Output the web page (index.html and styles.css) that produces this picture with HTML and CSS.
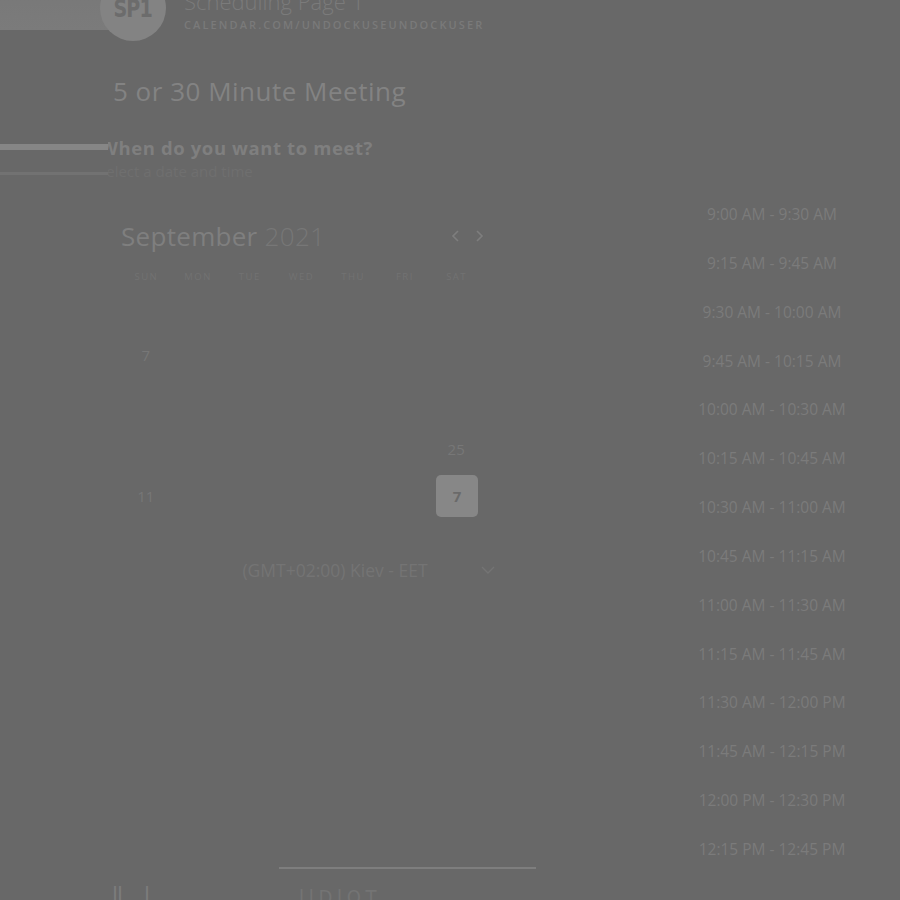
FILE: index.html
```html
<!DOCTYPE html>
<html>
<head>
<meta charset="utf-8">
<link rel="stylesheet" href="styles.css">
</head>
<body>
<div class="page">
  <header class="header">
    <div class="hbar"></div>
    <div class="avatar"><span>SP1</span></div>
    <div class="htext">
      <div class="pname">Scheduling Page 1</div>
      <div class="purl">CALENDAR.COM/UNDOCKUSEUNDOCKUSER</div>
    </div>
  </header>

  <main class="main">
    <section class="left">
      <h1 class="mtitle">5 or 30 Minute Meeting</h1>
      <div class="ask">
        <div class="rail">
          <div class="rail-a"></div>
          <div class="rail-b"></div>
        </div>
        <div class="ask-clip">
          <div class="ask-q">When do you want to meet?</div>
          <div class="ask-s">Select a date and time</div>
        </div>
      </div>

      <div class="cal">
        <div class="cal-head">
          <div class="month"><span class="mname">September</span> <span class="myear">2021</span></div>
          <div class="navs">
            <svg width="12" height="14" viewBox="0 0 12 14"><path d="M8 2 L3 7 L8 12" fill="none" stroke="#7e7e7e" stroke-width="1.6"/></svg>
            <svg width="12" height="14" viewBox="0 0 12 14"><path d="M4 2 L9 7 L4 12" fill="none" stroke="#7e7e7e" stroke-width="1.6"/></svg>
          </div>
        </div>
        <div class="grid">
          <div class="dh">SUN</div><div class="dh">MON</div><div class="dh">TUE</div><div class="dh">WED</div><div class="dh">THU</div><div class="dh">FRI</div><div class="dh">SAT</div>
          <div class="d"></div><div class="d"></div><div class="d"></div><div class="d"></div><div class="d"></div><div class="d"></div><div class="d"></div>
          <div class="d">7</div><div class="d"></div><div class="d"></div><div class="d"></div><div class="d"></div><div class="d"></div><div class="d"></div>
          <div class="d"></div><div class="d"></div><div class="d"></div><div class="d"></div><div class="d"></div><div class="d"></div><div class="d"></div>
          <div class="d"></div><div class="d"></div><div class="d"></div><div class="d"></div><div class="d"></div><div class="d"></div><div class="d">25</div>
          <div class="d">11</div><div class="d"></div><div class="d"></div><div class="d"></div><div class="d"></div><div class="d"></div><div class="d"><span class="sel">7</span></div>
        </div>
        <div class="tz">
          <span class="tz-text">(GMT+02:00) Kiev - EET</span>
          <svg class="tz-chev" width="16" height="10" viewBox="0 0 16 10"><path d="M2 2 L8 8 L14 2" fill="none" stroke="#747474" stroke-width="1.4"/></svg>
        </div>
      </div>
    </section>

    <aside class="times">
      <div class="slot">9:00 AM - 9:30 AM</div>
      <div class="slot">9:15 AM - 9:45 AM</div>
      <div class="slot">9:30 AM - 10:00 AM</div>
      <div class="slot">9:45 AM - 10:15 AM</div>
      <div class="slot">10:00 AM - 10:30 AM</div>
      <div class="slot">10:15 AM - 10:45 AM</div>
      <div class="slot">10:30 AM - 11:00 AM</div>
      <div class="slot">10:45 AM - 11:15 AM</div>
      <div class="slot">11:00 AM - 11:30 AM</div>
      <div class="slot">11:15 AM - 11:45 AM</div>
      <div class="slot">11:30 AM - 12:00 PM</div>
      <div class="slot">11:45 AM - 12:15 PM</div>
      <div class="slot">12:00 PM - 12:30 PM</div>
      <div class="slot">12:15 PM - 12:45 PM</div>
    </aside>
  </main>

  <footer class="foot">
    <div class="foot-line"></div>
    <div class="foot-marks">
      <span class="fm-a">ll<i class="gap"></i>l</span>
      <span class="fm-b">l l D l O T</span>
    </div>
  </footer>
</div>
</body>
</html>
```

FILE: styles.css
```css
html, body {
  margin: 0;
  padding: 0;
  background: #686868;
  overflow: hidden;
}
body {
  font-family: "Open Sans", "DejaVu Sans", sans-serif;
  color: #7c7c7c;
}
.page {
  width: 900px;
  height: 900px;
  overflow: hidden;
  position: relative;
}

/* header */
.header {
  display: flex;
  align-items: flex-start;
  margin-top: -25px;
  height: 67px;
}
.hbar {
  width: 112px;
  height: 55px;
  background: linear-gradient(#777777, #7b7b7b);
  flex: none;
}
.avatar {
  width: 66px;
  height: 66px;
  border-radius: 50%;
  background: #838383;
  margin-left: -12px;
  flex: none;
  display: flex;
  justify-content: center;
  padding-top: 21px;
  box-sizing: border-box;
}
.avatar span {
  font-family: "DejaVu Sans Condensed", "DejaVu Sans", sans-serif;
  font-size: 25px;
  line-height: 26px;
  font-weight: 700;
  color: #6c6c6c;
  letter-spacing: -1px;
  transform: scaleX(0.85);
}
.htext {
  margin-left: 18px;
  padding-top: 12px;
}
.pname {
  font-size: 22px;
  line-height: 28px;
  color: #7b7b7b;
  font-weight: 300;
}
.purl {
  font-size: 11px;
  line-height: 14px;
  letter-spacing: 2.1px;
  color: #7a7a7a;
  font-weight: 600;
  margin-top: 3px;
}

/* main */
.main {
  display: flex;
  align-items: flex-start;
}
.left {
  width: 600px;
  flex: none;
}
.mtitle {
  margin: 32px 0 0 113px;
  font-size: 26px;
  line-height: 34px;
  font-weight: 400;
  color: #838383;
  letter-spacing: 0.5px;
}
.ask {
  display: flex;
  margin-top: 19px;
}
.rail {
  width: 108px;
  flex: none;
  padding-top: 17px;
}
.rail-a {
  height: 6px;
  background: #868686;
}
.rail-b {
  height: 3px;
  background: #727272;
  margin-top: 22px;
}
.ask-clip {
  overflow: hidden;
  width: 400px;
  padding-top: 8px;
}
.ask-q {
  margin-left: -8px;
  font-size: 18.5px;
  line-height: 26px;
  font-weight: 700;
  color: #7f7f7f;
  letter-spacing: 0.6px;
}
.ask-s {
  margin-left: -10px;
  font-size: 15px;
  line-height: 20px;
  color: #6f6f6f;
}

/* calendar */
.cal {
  margin-left: 120px;
  width: 362px;
  margin-top: 21px;
}
.cal-head {
  display: flex;
  align-items: center;
  justify-content: space-between;
  height: 67px;
}
.month {
  font-size: 26px;
  font-weight: 300;
  margin-left: 1px;
  letter-spacing: 0.3px;
}
.mname { color: #7f7f7f; font-weight: 400; }
.myear { color: #777777; font-weight: 300; }
.navs {
  display: flex;
  gap: 11px;
  margin-right: -3px;
}
.grid {
  display: grid;
  grid-template-columns: repeat(7, 1fr);
  grid-template-rows: 15px;
  grid-auto-rows: 47px;
}
.dh {
  font-size: 9.5px;
  letter-spacing: 1.5px;
  color: #727272;
  text-align: center;
  line-height: 15px;
  padding-left: 1px;
}
.d {
  display: flex;
  align-items: center;
  justify-content: center;
  font-size: 15px;
  color: #777777;
}
.sel {
  width: 42px;
  height: 42px;
  border-radius: 5px;
  background: #878787;
  color: #6a6a6a;
  font-weight: 700;
  display: flex;
  align-items: center;
  justify-content: center;
  font-size: 15px;
  margin-left: 2px;
}
.tz {
  display: flex;
  align-items: center;
  margin-left: 70px;
  width: 306px;
  margin-top: 39px;
}
.tz-text {
  flex: 1;
  text-align: center;
  font-size: 17.5px;
  color: #747474;
}
.tz-chev {
  flex: none;
}

/* times */
.times {
  display: flex;
  flex-direction: column;
  align-items: center;
  padding-top: 160px;
  margin-left: 92px;
  width: 160px;
  flex: none;
}
.slot {
  height: 48.85px;
  line-height: 24px;
  font-size: 15.5px;
  color: #7b7b7b;
  white-space: nowrap;
}

/* footer */
.foot {
  position: absolute;
  left: 0;
  top: 867px;
  width: 900px;
}
.foot-line {
  margin-left: 279px;
  width: 257px;
  height: 2px;
  background: #7e7e7e;
}
.foot-marks {
  display: flex;
  margin-top: 13px;
  font-family: "DejaVu Sans Condensed", "DejaVu Sans", sans-serif;
  font-size: 24px;
  line-height: 30px;
  color: #7c7c7c;
}
.fm-a {
  margin-left: 112px;
  letter-spacing: -1px;
}
.gap { display: inline-block; width: 22px; }
.fm-b {
  margin-left: 150px;
  font-size: 20px;
  letter-spacing: -0.5px;
  color: #747474;
}
```
